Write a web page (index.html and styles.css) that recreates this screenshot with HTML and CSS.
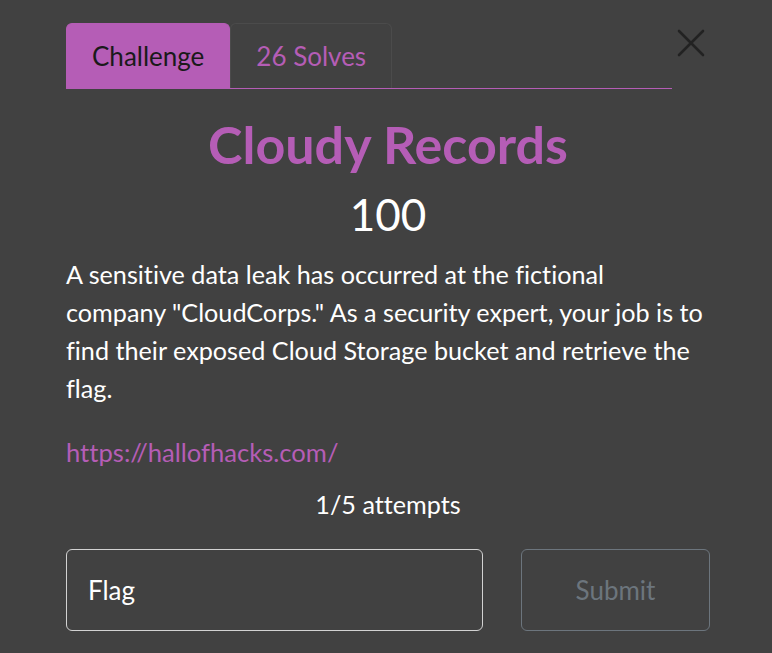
FILE: index.html
```html
<!DOCTYPE html>
<html>
<head>
<meta charset="utf-8">
<link rel="stylesheet" href="styles.css">
</head>
<body>
<div class="modal">
  <div class="top">
    <nav class="tabs">
      <div class="tab active">Challenge</div>
      <div class="tab">26 Solves</div>
    </nav>
    <button class="close" aria-label="Close">
      <svg width="28" height="28" viewBox="0 0 28 28"><path d="M2 2 L26 26 M26 2 L2 26" stroke="#222" stroke-width="2.6" stroke-linecap="round" fill="none"/></svg>
    </button>
  </div>
  <h2 class="title">Cloudy Records</h2>
  <h3 class="value">100</h3>
  <p class="desc">A sensitive data leak has occurred at the fictional company "CloudCorps." As a security expert, your job is to find their exposed Cloud Storage bucket and retrieve the flag.</p>
  <a class="link" href="#">https://hallofhacks.com/</a>
  <p class="attempts">1/5 attempts</p>
  <div class="form">
    <div class="input">Flag</div>
    <div class="submit">Submit</div>
  </div>
</div>
</body>
</html>
```

FILE: styles.css
```css
html, body {
  margin: 0;
  background: #414141;
  font-family: Lato, "Noto Sans", sans-serif;
  font-variant-ligatures: none;
  color: #fff;
}
.modal {
  padding: 23px 62px 0 66px;
}
.top {
  display: flex;
  align-items: flex-start;
}
.tabs {
  flex: 1;
  display: flex;
  border-bottom: 1px solid #b55db6;
}
.tab {
  font-size: 26px;
  line-height: 36px;
  padding: 14px 25px;
  border: 1px solid #4b4b4b;
  border-bottom: none;
  border-radius: 6px 6px 0 0;
  color: #b55db6;
}
.tab.active {
  background: #b55db6;
  border-color: #b55db6;
  color: #1a1a1a;
}
.close {
  width: 38px;
  height: 40px;
  margin-top: 0;
  padding: 0;
  background: none;
  border: none;
  display: flex;
  align-items: center;
  justify-content: center;
}
.title {
  text-align: center;
  color: #b55db6;
  font-size: 52px;
  font-weight: 700;
  line-height: 60px;
  margin: 25px 0 0;
}
.value {
  text-align: center;
  font-size: 44px;
  font-weight: 400;
  line-height: 52px;
  margin: 14px 0 0;
}
.desc {
  font-size: 25.2px;
  line-height: 38px;
  margin: 15px 0 0;
  padding-right: 6px;
}
.link {
  display: block;
  color: #b55db6;
  text-decoration: none;
  font-size: 25.6px;
  line-height: 38px;
  margin-top: 26px;
}
.attempts {
  text-align: center;
  font-size: 25.2px;
  line-height: 38px;
  margin: 14px 0 0;
}
.form {
  display: flex;
  gap: 38px;
  margin-top: 26px;
}
.input {
  width: 417px;
  height: 82px;
  box-sizing: border-box;
  border: 1px solid #d2d2d2;
  border-radius: 6px;
  padding: 0 21px;
  display: flex;
  align-items: center;
  font-size: 26px;
}
.submit {
  flex: 1;
  height: 82px;
  box-sizing: border-box;
  border: 1px solid #6c757d;
  border-radius: 6px;
  display: flex;
  align-items: center;
  justify-content: center;
  font-size: 26px;
  color: #6c757d;
}
```
